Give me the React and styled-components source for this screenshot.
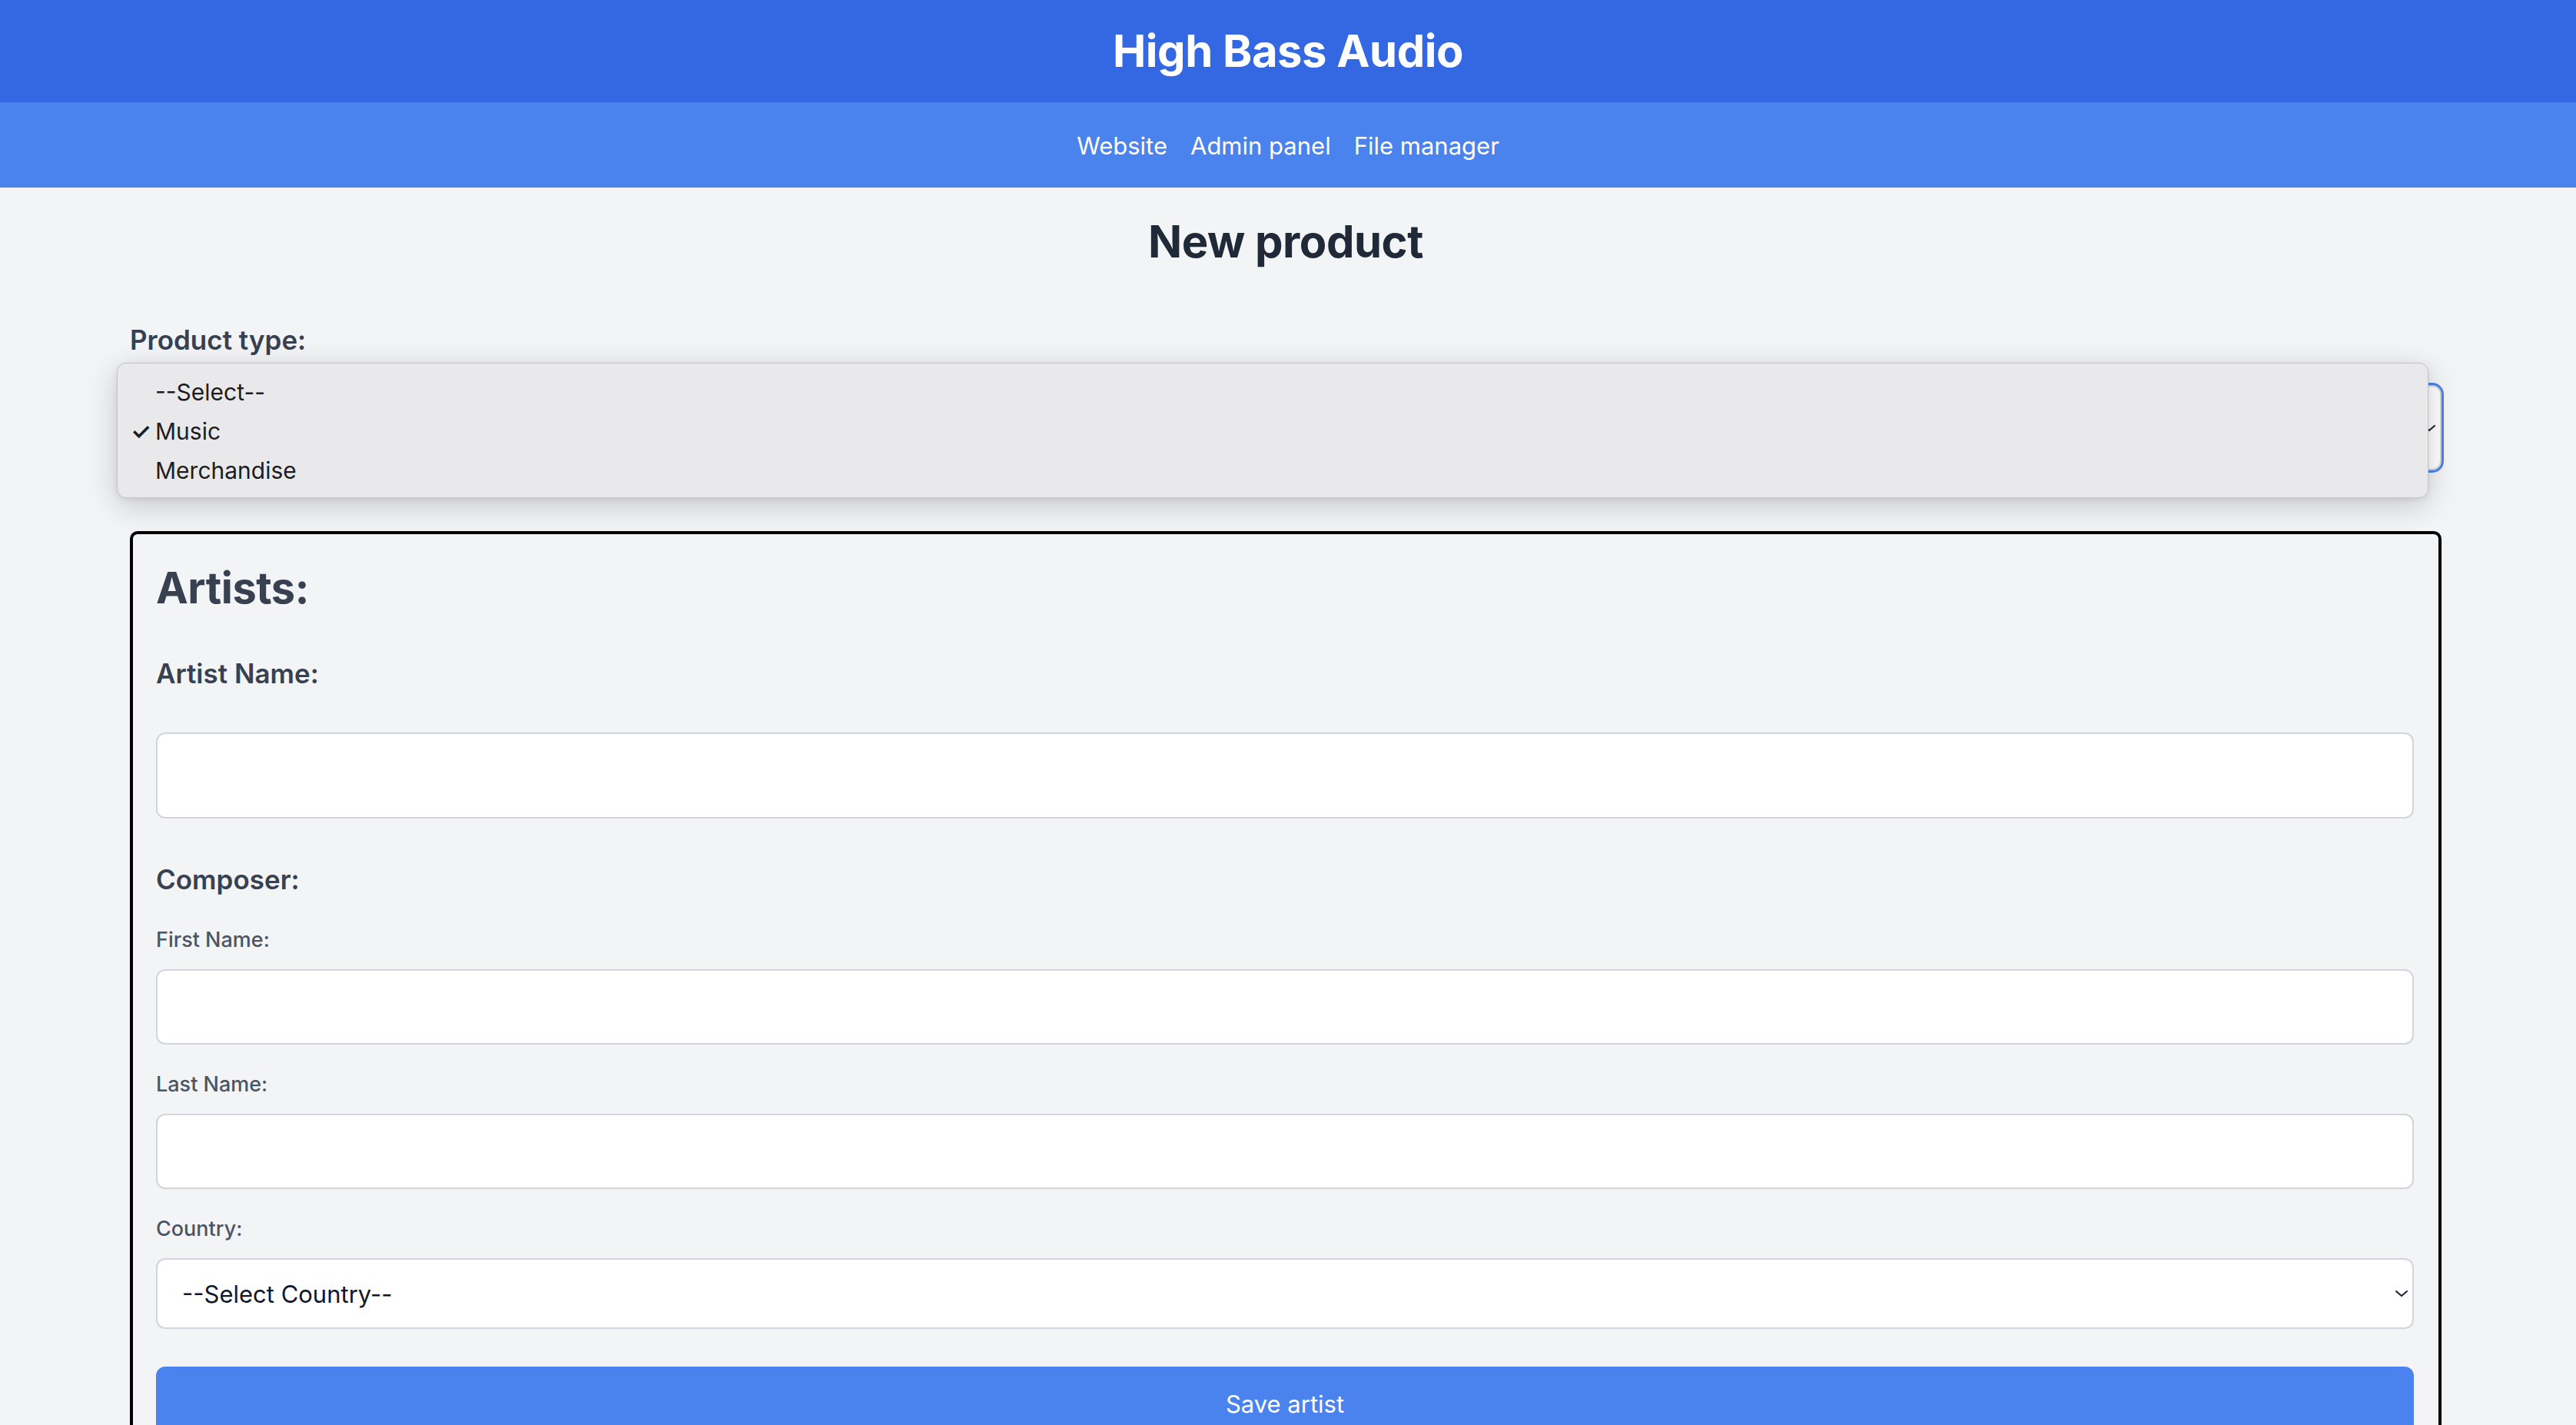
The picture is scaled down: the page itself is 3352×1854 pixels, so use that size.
import styled, { createGlobalStyle } from "styled-components";

const GlobalStyle = createGlobalStyle`
  html, body {
    margin: 0;
    padding: 0;
    background-color: #F3F4F6;
    font-family: Inter, "Noto Sans", "Liberation Sans", sans-serif;
  }
  * {
    box-sizing: border-box;
  }
`;

const Header = styled.header`
  background-color: #3467E2;
  padding: 31px 0 32px;
  text-align: center;
`;

const SiteTitle = styled.h1`
  margin: 0;
  font-size: 58px;
  line-height: 70px;
  font-weight: 700;
  color: #ffffff;
  letter-spacing: -0.5px;
`;

const Nav = styled.nav`
  background-color: #4A83ED;
  padding: 33px 0 30px;
  display: flex;
  justify-content: center;
  gap: 30px;
`;

const NavLink = styled.a`
  color: #ffffff;
  font-size: 31px;
  line-height: 48px;
  text-decoration: none;
`;

const Main = styled.main`
  padding: 34px 175px 0 169px;
`;

const PageTitle = styled.h2`
  margin: 0 0 66px;
  text-align: center;
  font-size: 58px;
  line-height: 72px;
  font-weight: 700;
  color: #1F2937;
  letter-spacing: -0.5px;
`;

const FieldLabel = styled.label`
  display: block;
  font-size: ${(p) => (p.$small ? "27px" : "35px")};
  line-height: ${(p) => (p.$small ? "40px" : "52px")};
  font-weight: ${(p) => (p.$small ? 500 : 600)};
  color: ${(p) => (p.$small ? "#4B5563" : "#374151")};
  margin-bottom: ${(p) => (p.$small ? "18px" : "33px")};
`;

const SelectWrap = styled.div`
  position: relative;
`;

const Select = styled.select`
  appearance: none;
  width: 100%;
  height: ${(p) => (p.$tall ? "111px" : "92px")};
  padding: 0 32px;
  border: 2px solid #D1D5DB;
  border-radius: 12px;
  background-color: #ffffff;
  font-family: inherit;
  font-size: 31px;
  color: #111827;
  box-shadow: ${(p) => (p.$focused ? "0 0 0 3px #4A83ED" : "none")};
  outline: none;
`;

const Chevron = styled.svg`
  position: absolute;
  top: 50%;
  right: ${(p) => p.$right || "8px"};
  width: 20px;
  height: 20px;
  transform: translateY(-50%);
  pointer-events: none;
`;

const Popup = styled.div`
  position: absolute;
  top: -29px;
  left: -17px;
  width: 3008px;
  height: 176px;
  padding: 11px 0;
  background-color: #E9E9EB;
  border: 1px solid #C4C4C6;
  border-radius: 12px;
  box-shadow: 0 10px 40px rgba(0, 0, 0, 0.18), 0 2px 8px rgba(0, 0, 0, 0.08);
  z-index: 5;
`;

const Option = styled.div`
  display: flex;
  align-items: center;
  height: 51px;
  font-size: 30px;
  color: #1d1d1f;
`;

const Check = styled.span`
  width: 49px;
  padding-left: 17px;
  font-size: 30px;
  font-weight: 600;
`;

const ArtistBox = styled.section`
  margin-top: 79px;
  border: 4px solid #000000;
  border-radius: 10px;
  padding: 35px 32px 40px 30px;
`;

const BoxTitle = styled.h3`
  margin: 0 0 50px;
  font-size: 56px;
  line-height: 70px;
  font-weight: 700;
  color: #374151;
  letter-spacing: -0.5px;
`;

const SubTitle = styled.h4`
  margin: 0 0 ${(p) => p.$mb || "33px"};
  font-size: 35px;
  line-height: 52px;
  font-weight: 600;
  color: #374151;
`;

const TextInput = styled.input`
  display: block;
  width: 100%;
  height: ${(p) => (p.$tall ? "112px" : "98px")};
  margin-bottom: ${(p) => p.$mb || "32px"};
  border: 2px solid #D1D5DB;
  border-radius: 12px;
  background-color: #ffffff;
  padding: 0 32px;
  font-family: inherit;
  font-size: 31px;
  outline: none;
`;

const SaveButton = styled.button`
  display: block;
  width: 100%;
  height: 96px;
  margin-top: 49px;
  border: none;
  border-radius: 12px;
  background-color: #4A83ED;
  color: #ffffff;
  font-family: inherit;
  font-size: 31px;
  cursor: pointer;
`;

const ChevronIcon = ({ right }) => (
  <Chevron $right={right} viewBox="0 0 20 20" fill="none">
    <path d="M3 7l7 6 7-6" stroke="#1F2937" strokeWidth="2.2" strokeLinecap="round" strokeLinejoin="round" />
  </Chevron>
);

const App = () => {
  return (
    <>
      <GlobalStyle />
      <Header>
        <SiteTitle>High Bass Audio</SiteTitle>
      </Header>
      <Nav>
        <NavLink href="#">Website</NavLink>
        <NavLink href="#">Admin panel</NavLink>
        <NavLink href="#">File manager</NavLink>
      </Nav>

      <Main>
        <PageTitle>New product</PageTitle>

        <FieldLabel>Product type:</FieldLabel>
        <SelectWrap>
          <Select $tall $focused defaultValue="music">
            <option value="">--Select--</option>
            <option value="music">Music</option>
            <option value="merch">Merchandise</option>
          </Select>
          <ChevronIcon right="6px" />
          <Popup>
            <Option><Check />--Select--</Option>
            <Option><Check>✓</Check>Music</Option>
            <Option><Check />Merchandise</Option>
          </Popup>
        </SelectWrap>

        <ArtistBox>
          <BoxTitle>Artists:</BoxTitle>
          <SubTitle $mb="51px">Artist Name:</SubTitle>
          <TextInput $tall $mb="53px" type="text" />

          <SubTitle>Composer:</SubTitle>
          <FieldLabel $small>First Name:</FieldLabel>
          <TextInput type="text" />
          <FieldLabel $small>Last Name:</FieldLabel>
          <TextInput type="text" />
          <FieldLabel $small>Country:</FieldLabel>
          <SelectWrap>
            <Select defaultValue="">
              <option value="">--Select Country--</option>
            </Select>
            <ChevronIcon right="6px" />
          </SelectWrap>

          <SaveButton type="button">Save artist</SaveButton>
        </ArtistBox>
      </Main>
    </>
  );
};

export default App;
